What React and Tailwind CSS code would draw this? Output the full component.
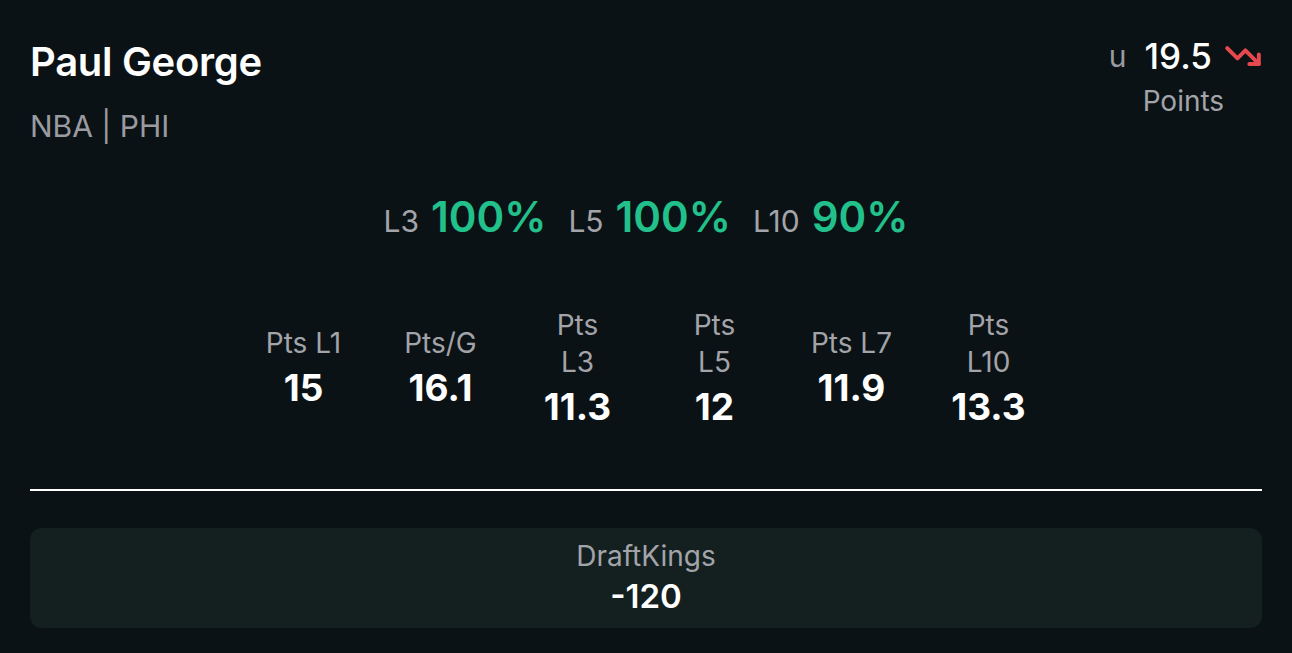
import React from 'react';
import { TrendingDown } from 'lucide-react';

const stats = [
  { label: ['Pts L1'], value: '15' },
  { label: ['Pts/G'], value: '16.1' },
  { label: ['Pts', 'L3'], value: '11.3' },
  { label: ['Pts', 'L5'], value: '12' },
  { label: ['Pts L7'], value: '11.9' },
  { label: ['Pts', 'L10'], value: '13.3' },
];

const hits = [
  { label: 'L3', value: '100%' },
  { label: 'L5', value: '100%' },
  { label: 'L10', value: '90%' },
];

export default function App() {
  return (
    <div
      className="w-[1292px] h-[653px] bg-[#0b1215] text-white px-[30px] pt-[38px] overflow-hidden"
      style={{ fontFamily: 'Inter, "Noto Sans", sans-serif' }}
    >
      {/* Header */}
      <div className="flex justify-between items-start">
        <div>
          <h1 className="text-[40px] leading-[48px] font-semibold tracking-[-0.3px]">Paul George</h1>
          <div className="mt-[22px] text-[30px] leading-[36px] text-[#9a9ba1]">NBA | PHI</div>
        </div>
        <div className="flex flex-col items-center -mt-[4px]">
          <div className="flex items-center">
            <span className="text-[30px] leading-[44px] text-[#9a9ba1] mr-[18px]">u</span>
            <span className="text-[35px] leading-[44px] font-medium">19.5</span>
            <TrendingDown className="w-[38px] h-[38px] text-[#e5484d] ml-[12px]" strokeWidth={2.5} />
          </div>
          <div className="text-[28px] leading-[34px] text-[#a3a4aa] mt-[6px] pr-[4px]">Points</div>
        </div>
      </div>

      {/* Hit rates */}
      <div className="flex justify-center items-baseline mt-[48px] gap-[22px] leading-[50px]">
        {hits.map((h, i) => (
          <div key={i} className="flex items-baseline gap-[12px]">
            <span className="text-[30px] text-[#a3a4aa]">{h.label}</span>
            <span className="text-[42px] font-semibold text-[#22c08a]">{h.value}</span>
          </div>
        ))}
      </div>

      {/* Stats */}
      <div className="flex justify-center items-center mt-[57px] h-[130px]">
        {stats.map((s, i) => (
          <div key={i} className="w-[137px] flex flex-col items-center">
            {s.label.map((l, j) => (
              <div key={j} className="text-[28px] leading-[37px] text-[#a3a4aa]">{l}</div>
            ))}
            <div className="text-[37px] leading-[46px] font-bold mt-[3px]">{s.value}</div>
          </div>
        ))}
      </div>

      <div className="h-[2px] bg-white mt-[56px]" />

      {/* Book */}
      <div className="mt-[37px] h-[100px] rounded-[12px] bg-[#13201f] flex flex-col items-center justify-center">
        <div className="text-[28px] leading-[34px] text-[#a3a4aa]">DraftKings</div>
        <div className="text-[33px] leading-[42px] font-semibold mt-[2px]">-120</div>
      </div>
    </div>
  );
}
